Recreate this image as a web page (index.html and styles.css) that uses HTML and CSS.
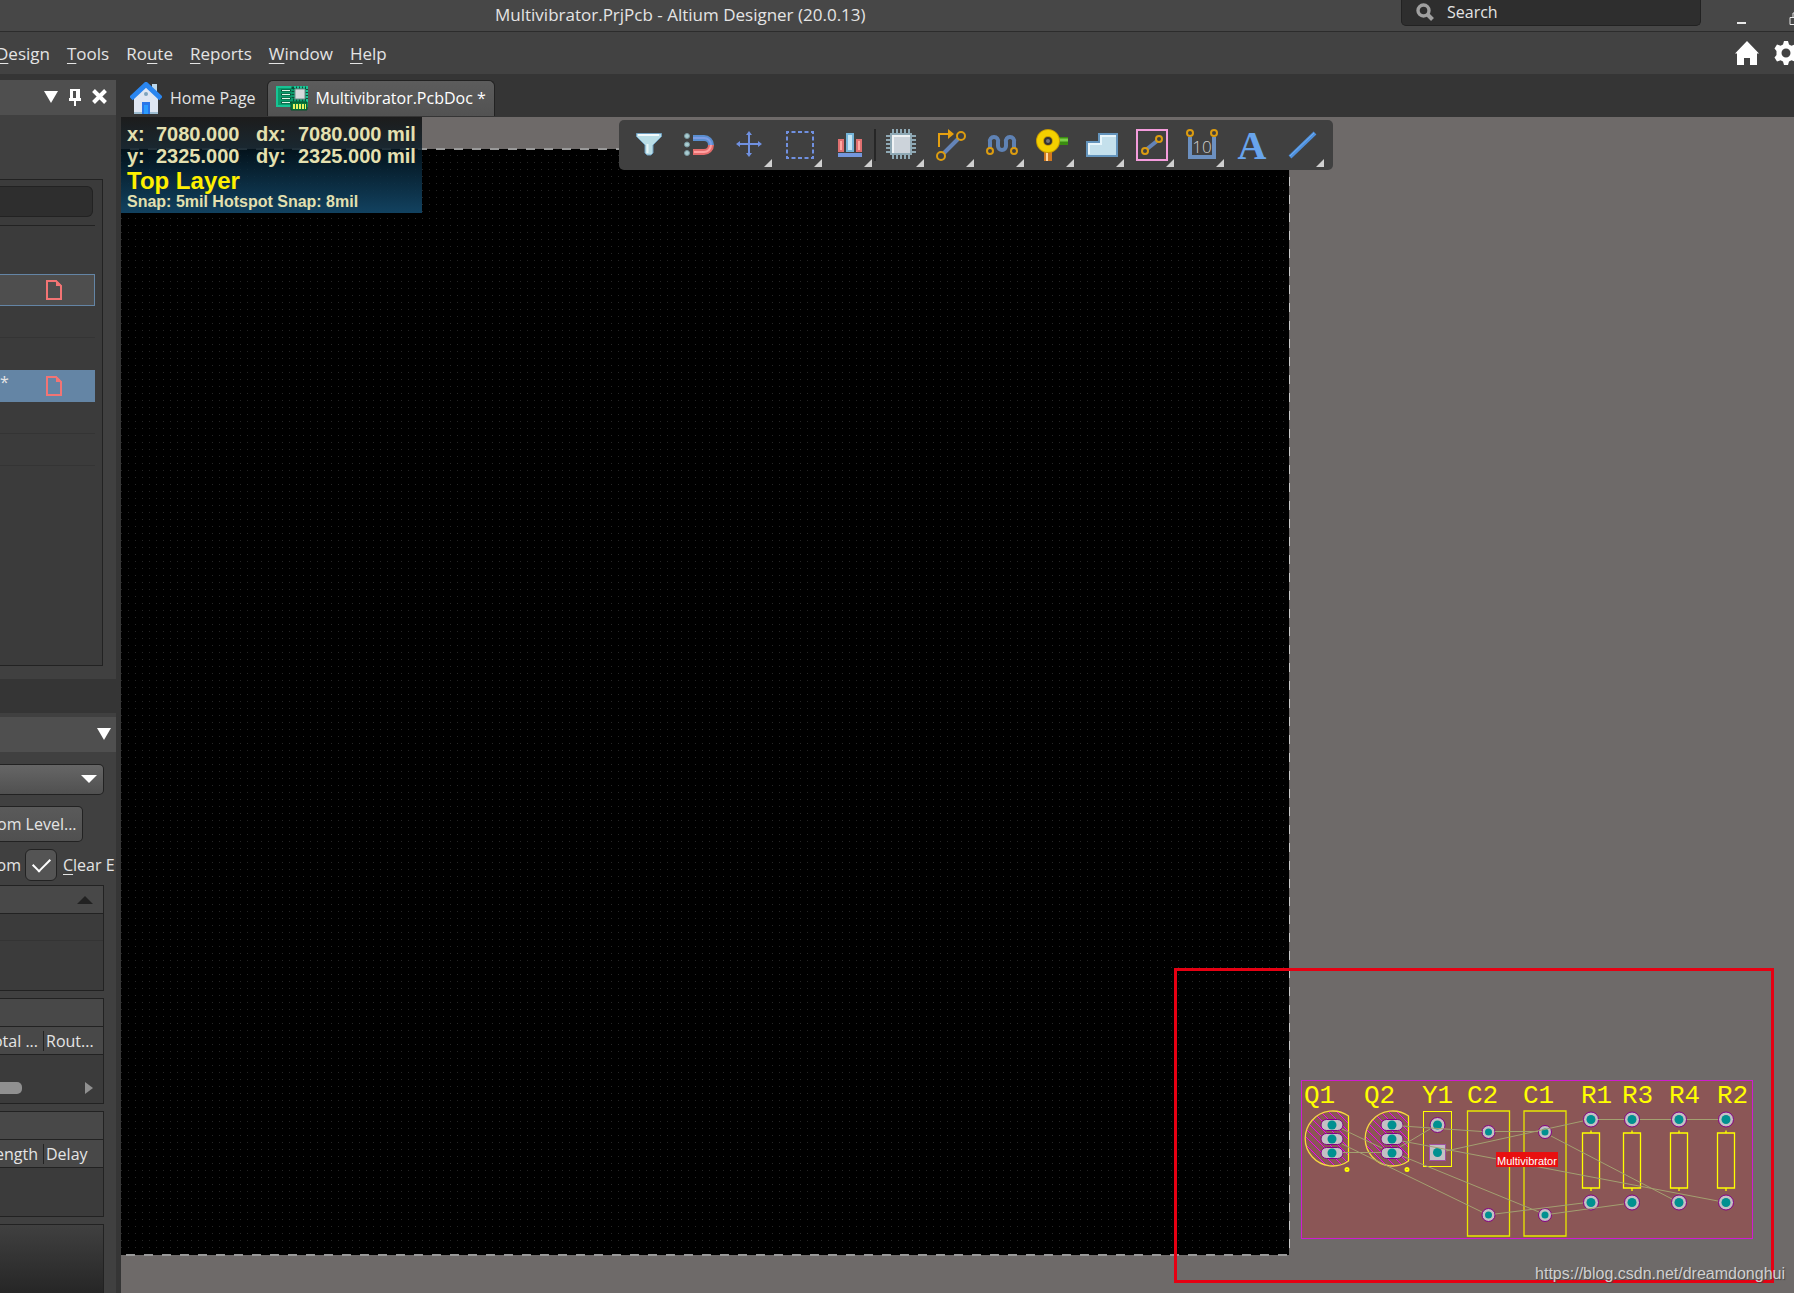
FILE: index.html
```html
<!DOCTYPE html>
<html lang="en">
  <head>
    <meta charset="UTF-8" />
    <meta name="viewport" content="width=device-width, initial-scale=1.0" />
    <title>Multivibrator.PrjPcb - Altium Designer (20.0.13)</title>
    <link rel="stylesheet" href="styles.css" />
  </head>
  <body>
    <header class="titlebar">
      <h1 class="title">Multivibrator.PrjPcb - Altium Designer (20.0.13)</h1>
      <label class="search">
        <svg width="18" height="18" viewBox="0 0 18 18">
          <circle cx="7.5" cy="7.5" r="5.5" fill="none" stroke="#a0a0a0" stroke-width="3.4" />
          <path d="M11.5 11.5l5 5" stroke="#a0a0a0" stroke-width="4" />
        </svg>
        <input type="text" placeholder="Search" aria-label="Search" />
      </label>
      <div class="window-buttons">
        <button aria-label="Minimize">
          <svg width="14" height="20"><path d="M2 15h9" stroke="#e8e8e8" stroke-width="2" /></svg>
        </button>
        <button aria-label="Restore">
          <svg width="14" height="20"><path d="M1 9.500h9v7h-9zM4 9V5h9v7h-3" fill="none" stroke="#e8e8e8" /></svg>
        </button>
      </div>
    </header>

    <nav class="menubar">
      <div class="menu">
        <button><u>D</u>esign</button>
        <button><u>T</u>ools</button>
        <button>Ro<u>u</u>te</button>
        <button><u>R</u>eports</button>
        <button><u>W</u>indow</button>
        <button><u>H</u>elp</button>
      </div>
      <div class="menu-icons">
        <button aria-label="Home">
          <svg width="24" height="24"><path d="M12 0l12 12.500h-2V24h-7v-7H9v7H2V12.500H0z" fill="#fff" /></svg>
        </button>
        <button aria-label="Settings">
          <svg width="24" height="24">
            <path d="M10 0h4l1 3.500 2.500 1.200L21 3.500l2.500 4-2 2.500v4l2 2.500-2.500 4-3.500-1.200L15 20.500 14 24h-4l-1-3.500-2.500-1.200L3 20.500l-2.500-4L2.500 14v-4l-2-2.500 2.500-4 3.500 1.200L9 3.500zM12 7.500a4.500 4.500 0 1 0 0 9 4.500 4.500 0 0 0 0-9z" fill="#fff" />
          </svg>
        </button>
      </div>
    </nav>

    <div class="content">
      <aside class="sidebar">
        <section class="panel projects">
          <div class="panel-header">
            <button aria-label="Panel menu"><svg width="14" height="12"><path d="M0 0h14l-7 12z" fill="#fff" /></svg></button>
            <button aria-label="Pin">
              <svg width="12" height="18"><path d="M1 1h10v9h1v3H7v5H5v-5H0v-3h1zM4 3v7h3V3z" fill="#fff" fill-rule="evenodd" /></svg>
            </button>
            <button aria-label="Close"><svg width="15" height="15"><path d="M1.500 1.500l12 12M13.500 1.500l-12 12" stroke="#fff" stroke-width="4" /></svg></button>
          </div>
          <div class="tree">
            <input class="tree-search" type="text" aria-label="Search projects" />
            <ul class="tree-rows">
              <li></li>
              <li class="outlined">
                <svg width="16" height="20"><path d="M1 1h9l5 5v13H1z" fill="none" stroke="#f27474" stroke-width="2" /><path d="M10 0v6h6z" fill="#f27474" /></svg>
              </li>
              <li></li>
              <li></li>
              <li class="selected">
                <span>*</span>
                <svg width="16" height="20"><path d="M1 1h9l5 5v13H1z" fill="none" stroke="#f27474" stroke-width="2" /><path d="M10 0v6h6z" fill="#f27474" /></svg>
              </li>
              <li></li>
              <li></li>
            </ul>
          </div>
        </section>

        <section class="panel pcb">
          <div class="panel-header">
            <button aria-label="Panel menu"><svg width="14" height="12"><path d="M0 0h14l-7 12z" fill="#fff" /></svg></button>
          </div>
          <div class="pcb-body">
            <div class="select-box">
              <select aria-label="Panel mode"><option></option></select>
              <svg width="16" height="8"><path d="M0 0h16l-8 8z" fill="#fff" /></svg>
            </div>
            <button class="level">om Level...</button>
            <div class="checks">
              <span class="cut">om</span>
              <input type="checkbox" id="clear" checked />
              <label for="clear"><u>C</u>lear E</label>
            </div>
            <div class="list">
              <div class="list-head"><svg width="16" height="8"><path d="M0 8h16L8 0z" fill="#222" /></svg></div>
              <div class="list-row"></div>
            </div>
            <div class="list">
              <div class="list-head"></div>
              <div class="list-cols"><span class="col-first">otal ...</span><span class="col-last">Rout...</span></div>
              <div class="scroll">
                <div class="thumb"></div>
                <svg width="8" height="12"><path d="M0 0l8 6-8 6z" fill="#909090" /></svg>
              </div>
            </div>
            <div class="list">
              <div class="list-head"></div>
              <div class="list-cols"><span class="col-first">ength</span><span class="col-last">Delay</span></div>
            </div>
            <div class="preview"></div>
          </div>
        </section>
      </aside>

      <main class="editor">
        <div class="tabs">
          <button class="tab">
            <svg width="32" height="32">
              <path d="M22 2h5v12h-5z" fill="#bcd7ea" />
              <path d="M4 15L16 4l12 11v17H4z" fill="#dfe6f2" />
              <path d="M4 30h24v2H4z" fill="#9dbcd0" />
              <path d="M1 16.500L16 2.500l15 14" fill="none" stroke="#2a86f0" stroke-width="5" />
              <circle cx="16" cy="12" r="2" fill="#7fa3bd" />
              <path d="M12 20h8v12h-8z" fill="#2a76e8" />
              <path d="M14 23h4v9h-4z" fill="#2a9cff" />
            </svg>
            Home Page
          </button>
          <button class="tab active">
            <svg width="32" height="26">
              <path d="M1 2h30v19H1z" fill="#0a9c6c" stroke="#17c495" stroke-width="2" />
              <path d="M5 5.500h10M5 9.500h10M5 13.500h10M5 17.500h10" stroke="#0a4a38" stroke-width="2" />
              <path d="M6 5.500h8M6 9.500h8M6 13.500h8M6 17.500h8" stroke="#e0f5e8" stroke-width="1" />
              <path d="M17 3h14v12H17z" fill="none" stroke="#0a5038" stroke-width="3" stroke-dasharray="1 2" />
              <path d="M19 4h10v10H19z" fill="#d6dadc" stroke="#6f8c8a" />
              <path d="M15 17h16v8H15z" fill="#067a3c" stroke="#04502a" />
              <path d="M17 21.500h13" stroke="#e8f060" stroke-width="5" stroke-dasharray="2 1" />
            </svg>
            Multivibrator.PcbDoc *
          </button>
        </div>

        <div class="workspace">
          <!-- Board and components, drawn in window coordinates -->
          <svg class="canvas" width="100%" height="100%">
            <defs>
              <pattern id="dots" width="7" height="7" patternUnits="userSpaceOnUse">
                <rect x="2" y="1" width="1" height="1" fill="#262626" />
              </pattern>
              <pattern id="hatch" width="8" height="8" patternUnits="userSpaceOnUse">
                <path d="M-1 -1l10 10M-1 7l2 2M7 -1l2 2" stroke="#f000f0" />
              </pattern>
              <g id="slot">
                <rect x="-11" y="-5.500" width="22" height="11" rx="5.500" fill="#c4c0c4" stroke="#850085" />
                <circle r="4.500" fill="#009090" />
              </g>
              <g id="transistor">
                <path d="M16.500 -23a27.500 27.500 0 1 0 0 45z" fill="url(#hatch)" stroke="#f5d840" stroke-width="1.300" />
                <path d="M16.500 -23v45" stroke="#ff0" />
                <circle cx="15" cy="30.500" r="1.500" fill="none" stroke="#ff0" stroke-width="2" />
                <use href="#slot" y="-14" />
                <use href="#slot" />
                <use href="#slot" y="14" />
              </g>
              <g id="pad">
                <circle r="7.500" fill="#c4c0c4" stroke="#850085" />
                <circle r="4.500" fill="#009090" />
              </g>
              <g id="small-pad">
                <circle r="6.500" fill="#c4c0c4" stroke="#850085" />
                <circle r="3.500" fill="#009090" />
              </g>
              <g id="capacitor">
                <path d="M-21 -21h42v125h-42z" fill="none" stroke="#e8e800" stroke-width="1.300" />
                <use href="#small-pad" />
                <use href="#small-pad" y="83" />
              </g>
              <g id="resistor">
                <path d="M-8.500 13.500h17v55h-17zM0 11v2.500M0 68.500v3" fill="none" stroke="#ff0" stroke-width="1.300" />
                <use href="#pad" />
                <use href="#pad" y="83" />
              </g>
            </defs>
            <g transform="translate(-121 -117)">
              <rect x="121" y="149" width="1168" height="1106" fill="#000" />
              <rect x="121" y="149" width="1168" height="1105" fill="url(#dots)" />
              <path d="M112 149H1289" stroke="#999" stroke-width="2" stroke-dasharray="9 9" />
              <path d="M1289.500 148V1255" stroke="#c8c8c8" stroke-dasharray="9 9" stroke-dashoffset="7" />
              <path d="M121 1255H1289" stroke="#999" stroke-width="2" stroke-dasharray="9 9" stroke-dashoffset="13" />

              <rect x="1301.500" y="1080.500" width="451" height="158" fill="#8b5656" stroke="#d01cd0" />
              <use href="#transistor" x="1332" y="1139" />
              <use href="#transistor" x="1392" y="1139" />
              <rect x="1423.500" y="1111.500" width="28" height="55" fill="none" stroke="#ff0" />
              <use href="#pad" x="1437.500" y="1125" />
              <rect x="1429.500" y="1144.500" width="16" height="16" fill="#c4c0c4" stroke="#a050a0" />
              <circle cx="1437.500" cy="1152.500" r="4.500" fill="#009090" />
              <use href="#capacitor" x="1488.500" y="1132" />
              <use href="#capacitor" x="1545" y="1132" />
              <use href="#resistor" x="1591" y="1119.500" />
              <use href="#resistor" x="1632" y="1119.500" />
              <use href="#resistor" x="1679" y="1119.500" />
              <use href="#resistor" x="1726" y="1119.500" />

              <!-- Ratsnest -->
              <g stroke="#a3a070">
                <path d="M1342 1129L1382 1148M1342 1144L1482 1212M1343 1152.500H1381" />
                <path d="M1402 1126L1482 1131.500M1402 1141L1718 1201M1402 1156L1539 1212M1400 1147L1430 1129" />
                <path d="M1446 1151L1583 1121M1495 1131.500H1538M1551 1136L1672 1199" />
                <path d="M1495 1214L1583 1203M1551 1214L1624 1204" />
                <path d="M1598 1119.500H1624M1640 1119.500H1671M1687 1119.500H1718" />
              </g>

              <g class="designators">
                <text x="1304" y="1103">Q1</text>
                <text x="1364" y="1103">Q2</text>
                <text x="1422" y="1103">Y1</text>
                <text x="1467" y="1103">C2</text>
                <text x="1523" y="1103">C1</text>
                <text x="1581" y="1103">R1</text>
                <text x="1622" y="1103">R3</text>
                <text x="1669" y="1103">R4</text>
                <text x="1717" y="1103">R2</text>
              </g>
              <rect x="1496" y="1152" width="62" height="15" fill="#e81010" />
              <text class="room-name" x="1497" y="1165">Multivibrator</text>
              <rect x="1175.500" y="969.500" width="597" height="312" fill="none" stroke="#e60012" stroke-width="3" />
            </g>
          </svg>

          <div class="hud">
            <div class="coords"><span>x:</span><span>7080.000</span><span>dx:</span><span>7080.000 mil</span></div>
            <div class="coords"><span>y:</span><span>2325.000</span><span>dy:</span><span>2325.000 mil</span></div>
            <div class="layer">Top Layer</div>
            <div class="snap">Snap: 5mil Hotspot Snap: 8mil</div>
          </div>

          <div class="toolbar">
            <button aria-label="Filter">
              <svg width="50" height="50"><path d="M12.500 13.500h25v3l-8.500 8.500v8l-2 2h-4l-2-2v-8l-8.500-8.500z" fill="#b9dde6" stroke="#6f9fc0" /><path d="M14 15h21" stroke="#f2fafc" stroke-width="2" /><path d="M23.500 24v9" stroke="#e6f5f8" stroke-width="2" /></svg>
            </button>
            <button aria-label="Snapping">
              <svg width="50" height="50">
                <g fill="#a9ccd0" stroke="#7898a0"><circle cx="13" cy="16" r="2.500" /><circle cx="13" cy="24.500" r="2.500" /><circle cx="13" cy="33" r="2.500" /></g>
                <path d="M19 18h11a7 7 0 0 1 7 7" fill="none" stroke="#5a8ed0" stroke-width="6" />
                <path d="M19 32h11a7 7 0 0 0 7-7" fill="none" stroke="#e46c6c" stroke-width="6" />
                <path d="M19 18h11a7 7 0 0 1 7 7" fill="none" stroke="#7c9ce4" stroke-width="2" />
                <path d="M20 32h10a7 7 0 0 0 7-7" fill="none" stroke="#ffa0a0" stroke-width="2" />
              </svg>
            </button>
            <button aria-label="Move">
              <svg width="50" height="50"><path d="M14 24h22M25 13v22" stroke="#7090e0" stroke-width="2" /><path d="M12 24l4-3v6zM38 24l-4-3v6zM25 11l-3 4h6zM25 37l-3-4h6z" fill="#7090e0" /><path class="more" d="M48 39v8h-8z" /></svg>
            </button>
            <button aria-label="Select">
              <svg width="50" height="50"><rect x="13" y="12" width="26" height="26" fill="none" stroke="#7090e0" stroke-width="2" stroke-dasharray="4 2.500" stroke-dashoffset="2" /><path class="more" d="M48 39v8h-8z" /></svg>
            </button>
            <button aria-label="Align">
              <svg width="50" height="50"><path d="M15 20h4v11h-4zM33 20h4v11h-4z" fill="#ffa8a0" stroke="#e07070" stroke-width="2" /><path d="M23 14h6v17h-6z" fill="#c5e6f4" stroke="#74b4d8" stroke-width="2" /><path d="M14 35h24" stroke="#7496dc" stroke-width="4" /><path class="more" d="M48 39v8h-8z" /></svg>
            </button>
            <i class="divider"></i>
            <button aria-label="Place component">
              <svg width="50" height="50"><path d="M17 9v30M21 9v30M25 9v30M29 9v30M33 9v30M10 16h30M10 20h30M10 24h30M10 28h30M10 32h30" stroke="#8fa9b5" stroke-width="2" /><rect x="15" y="14" width="20" height="20" fill="#ccd3da" stroke="#8fa9b5" stroke-width="2" /><path d="M17 33V16h17" fill="none" stroke="#f0f3f5" stroke-width="2" /><path class="more" d="M48 39v8h-8z" /></svg>
            </button>
            <button aria-label="Route">
              <svg width="50" height="50"><path d="M13 27V14h10" fill="none" stroke="#e6a010" stroke-width="2" /><path d="M22 9l6 5-6 5z" fill="#e6a010" /><path d="M18 33l14-14" stroke="#6484b8" stroke-width="4" /><g fill="#404040" stroke="#dc9c10" stroke-width="2"><circle cx="35" cy="16" r="4" /><circle cx="15" cy="36" r="4" /></g><path class="more" d="M48 39v8h-8z" /></svg>
            </button>
            <button aria-label="Tune length">
              <svg width="50" height="50"><path d="M14 28v-6a4 4 0 0 1 4-5 4 4 0 0 1 4 5v4a4 4 0 0 0 8 0v-4a4 4 0 0 1 4-5 4 4 0 0 1 4 5v6" fill="none" stroke="#5f82b4" stroke-width="4" /><g fill="#404040" stroke="#dc9c10" stroke-width="2"><circle cx="14" cy="31" r="3" /><circle cx="38" cy="31" r="3" /></g><path class="more" d="M48 39v8h-8z" /></svg>
            </button>
            <button aria-label="Place via">
              <svg width="50" height="50"><path d="M30 21h12" stroke="#3a8c10" stroke-width="8" /><path d="M33 20h9" stroke="#7cd048" stroke-width="3" /><path d="M22 30v11" stroke="#d07820" stroke-width="8" /><path d="M21 32v9" stroke="#ffd8a0" stroke-width="2" /><circle cx="22" cy="21" r="8" fill="#333" stroke="#c89c00" stroke-width="8" /><circle cx="22" cy="21" r="8" fill="none" stroke="#f4d000" stroke-width="6" /><circle cx="22" cy="21" r="2" fill="#777" /><path class="more" d="M48 39v8h-8z" /></svg>
            </button>
            <button aria-label="Place polygon">
              <svg width="50" height="50"><path d="M11 22h12v-8h18v22H11z" fill="#c4e0ec" stroke="#6494bc" stroke-width="2" /><path d="M13 34V24h12v-8h15" fill="none" stroke="#e8f6fc" stroke-width="2" /><path class="more" d="M48 39v8h-8z" /></svg>
            </button>
            <button aria-label="Place line object">
              <svg width="50" height="50"><rect x="11" y="10" width="30" height="30" fill="none" stroke="#f49cdc" stroke-width="2" /><path d="M21 29l10-8" stroke="#6484b8" stroke-width="4" /><g fill="#404040" stroke="#dc9c10" stroke-width="2"><circle cx="33" cy="19" r="3" /><circle cx="19" cy="31" r="3" /></g><path class="more" d="M48 39v8h-8z" /></svg>
            </button>
            <button aria-label="Place dimension">
              <svg width="50" height="50"><path d="M14 17v20h24V17" fill="none" stroke="#6c90c0" stroke-width="4" /><g fill="#404040" stroke="#dc9c10" stroke-width="2"><circle cx="14" cy="13" r="3" /><circle cx="38" cy="13" r="3" /></g><text class="dim-text" x="26" y="33">10</text><path class="more" d="M48 39v8h-8z" /></svg>
            </button>
            <button aria-label="Place string">
              <svg width="50" height="50"><text class="string-text" x="26" y="39">A</text></svg>
            </button>
            <button aria-label="Place line">
              <svg width="50" height="50"><path d="M14 37l25-24" stroke="#5090dc" stroke-width="4" /><path d="M14 36l24-23" stroke="#70b0f4" stroke-width="1" /><path class="more" d="M48 39v8h-8z" /></svg>
            </button>
          </div>
          <a class="source" href="https://blog.csdn.net/dreamdonghui">https://blog.csdn.net/dreamdonghui</a>
        </div>
      </main>
    </div>
  </body>
</html>
```
FILE: styles.css
```css
* {
  box-sizing: border-box;
}
body {
  margin: 0;
  height: 100vh;
  display: flex;
  flex-direction: column;
  overflow: hidden;
  background-color: #353535;
  color: #e4e4e4;
  font-family: "Open Sans", "Noto Sans", sans-serif;
  font-size: 16px;
  line-height: 24px;
}
button {
  padding: 0;
  border: none;
  background: none;
  color: inherit;
  font: inherit;
  flex-shrink: 0;
}
svg {
  display: block;
  flex-shrink: 0;
}
u {
  text-underline-offset: 3px;
}

/* Title bar */
.titlebar {
  height: 32px;
  flex-shrink: 0;
  display: flex;
  background-color: #474747;
  border-bottom: 1px solid #2c2c2c;
}
.title {
  margin: 3px 0 0 495px;
  font-size: 17px;
  font-weight: normal;
}
.search {
  width: 300px;
  height: 26px;
  margin-left: auto;
  padding: 0 14px 2px;
  display: flex;
  align-items: center;
  gap: 13px;
  background-color: #2e2e2e;
  border: 1px solid #222;
  border-top: none;
  border-radius: 0 0 5px 5px;
}
.search input {
  flex: 1;
  padding: 0;
  border: none;
  background: none;
  font: inherit;
}
.search input::placeholder {
  color: #e4e4e4;
}
.window-buttons {
  display: flex;
  gap: 40px;
  margin: 5px -9px 0 34px;
}

/* Menu bar */
.menubar {
  height: 42px;
  flex-shrink: 0;
  display: flex;
  align-items: center;
  justify-content: space-between;
  background-color: #424242;
}
.menu {
  display: flex;
  gap: 17px;
  margin-left: -4px;
  padding-top: 2px;
  font-size: 17px;
}
.menu-icons {
  display: flex;
  gap: 15px;
  margin-right: -4px;
}
.content {
  flex: 1;
  min-height: 0;
  display: flex;
  gap: 5px;
}

/* Left panels */
.sidebar {
  width: 116px;
  flex-shrink: 0;
  padding-top: 6px;
  display: flex;
  flex-direction: column;
  gap: 34px;
  overflow: hidden;
}
.panel {
  background-color: #404040;
}
.projects {
  height: 599px;
  display: flex;
  flex-direction: column;
}
.panel-header {
  height: 35px;
  flex-shrink: 0;
  padding: 0 9px 2px;
  display: flex;
  align-items: center;
  justify-content: flex-end;
  gap: 11px;
  background-color: #4f4f4f;
}
.tree {
  flex: 1;
  margin: 64px 13px 13px 0;
  padding-top: 6px;
  background-color: #3b3b3b;
  border: 1px solid #222;
  border-left: none;
}
.tree-search {
  display: block;
  width: 93px;
  height: 31px;
  background-color: #2e2e2e;
  border: 1px solid #222;
  border-left: none;
  border-radius: 0 6px 6px 0;
}
.tree-rows {
  width: 95px;
  margin: 8px 0 0;
  padding: 0;
  list-style: none;
}
.tree-rows li {
  position: relative;
  height: 32px;
  padding-left: 46px;
  display: flex;
  align-items: center;
  border-bottom: 1px solid #343434;
}
.tree-rows li:first-child {
  height: 49px;
  border-top: 1px solid #222;
  border-bottom: none;
}
.tree-rows .outlined {
  background-color: #4e4e4e;
  border: 1px solid #6485a5;
  border-left: none;
}
.tree-rows li:nth-child(4) {
  border: none;
}
.tree-rows .selected {
  background-color: #6485a5;
  border: none;
}
.tree-rows span {
  position: absolute;
  left: 0;
  top: 0;
}
.pcb {
  flex: 1;
  min-height: 0;
  padding-top: 4px;
  display: flex;
  flex-direction: column;
}
.pcb .panel-header {
  padding: 0 5px 2px;
}
.pcb-body {
  flex: 1;
  min-height: 0;
  padding: 12px 12px 0 0;
  display: flex;
  flex-direction: column;
  align-items: flex-start;
}
.select-box {
  position: relative;
  width: 100%;
}
.select-box svg {
  position: absolute;
  right: 7px;
  top: 11px;
}
.select-box select {
  display: block;
  width: 100%;
  height: 31px;
  appearance: none;
  background: linear-gradient(#666, #505050);
  border: 1px solid #222;
  border-left: none;
  border-radius: 0 5px 5px 0;
}
.level {
  height: 36px;
  margin-top: 11px;
  padding-right: 5px;
  text-indent: -3px;
  background: linear-gradient(#5a5a5a, #505050);
  border: 1px solid #222;
  border-left: none;
  border-radius: 0 5px 5px 0;
}
.checks {
  height: 32px;
  margin: 7px 0 4px;
  display: flex;
  align-items: center;
  white-space: nowrap;
}
.cut {
  width: 25px;
  display: flex;
  justify-content: flex-end;
  padding-right: 4px;
}
.checks input {
  appearance: none;
  width: 32px;
  height: 32px;
  flex-shrink: 0;
  margin: 0 6px 0 0;
  display: grid;
  place-content: center;
  background-color: #545454;
  border: 1px solid #222;
  border-radius: 6px;
}
.checks input:checked::before {
  content: "";
  width: 15px;
  height: 8px;
  margin-bottom: 4px;
  border: solid #fff;
  border-width: 0 0 2px 2px;
  rotate: -45deg;
}
.list {
  width: 100%;
  height: 106px;
  flex-shrink: 0;
  margin-bottom: 7px;
  background-color: #3b3b3b;
  border: 1px solid #222;
  border-left: none;
}
.list-head,
.list-cols {
  height: 28px;
  display: flex;
  align-items: center;
  background-color: #484848;
  border-bottom: 1px solid #222;
}
.list-head {
  justify-content: flex-end;
  padding-right: 10px;
}
.list-row {
  height: 27px;
  border-bottom: 1px solid #343434;
}
.col-first {
  width: 44px;
  height: 20px;
  padding-right: 5px;
  display: flex;
  align-items: center;
  justify-content: flex-end;
  white-space: nowrap;
  border-right: 1px solid #222;
}
.list-cols .col-last {
  padding-left: 2px;
}
.scroll {
  height: 48px;
  padding: 18px 10px 0 0;
  display: flex;
  align-items: center;
  justify-content: space-between;
}
.thumb {
  width: 22px;
  height: 12px;
  background-color: #909090;
  border-radius: 0 5px 5px 0;
}
.preview {
  width: 100%;
  flex: 1;
  background: linear-gradient(#404040, #262626);
  border: 1px solid #222;
  border-width: 1px 1px 0 0;
}

/* Document tabs */
.editor {
  flex: 1;
  min-width: 0;
  display: flex;
  flex-direction: column;
}
.tabs {
  height: 43px;
  flex-shrink: 0;
  padding: 6px 0 1px 9px;
  display: flex;
  gap: 11px;
}
.tab {
  display: flex;
  align-items: center;
  gap: 8px;
}
.tab.active {
  padding: 0 8px 1px;
  color: #fff;
  background: linear-gradient(#5c5c5c, #525252);
  border: 1px solid #222;
  border-bottom: none;
  border-radius: 6px 6px 0 0;
}

/* Workspace */
.workspace {
  position: relative;
  flex: 1;
  min-height: 0;
  background-color: #6e6a69;
  overflow: hidden;
}
.designators {
  fill: #ff0;
  font-family: "Liberation Mono", monospace;
  font-size: 26px;
}
.room-name {
  fill: #fff;
  font-family: "Liberation Sans", sans-serif;
  font-size: 11px;
}
.hud {
  position: absolute;
  left: 0;
  top: 0;
  width: 301px;
  height: 96px;
  padding: 6px 0 0 6px;
  background: linear-gradient(rgba(24, 24, 24, 0.95), rgba(4, 24, 36, 0.8) 35%, #124260);
  color: #e4e0b0;
  font-family: "Liberation Sans", sans-serif;
  font-weight: bold;
}
.coords {
  display: grid;
  grid-template-columns: 29px 100px 42px auto;
  font-size: 20px;
  line-height: 22px;
}
.layer {
  color: #fff000;
  font-size: 24px;
  line-height: 28px;
}
.snap {
  font-size: 16px;
  line-height: 14px;
}
.toolbar {
  position: absolute;
  left: 498px;
  top: 3px;
  height: 50px;
  padding: 0 7px 0 5px;
  display: flex;
  align-items: center;
  background-color: #404040;
  border-radius: 5px;
}
.divider {
  width: 2px;
  height: 32px;
  background-color: #262626;
}
.more {
  fill: #d0d0d0;
}
.dim-text {
  fill: #d0d0d0;
  font-family: "Open Sans", sans-serif;
  font-size: 17px;
  font-weight: 300;
  text-anchor: middle;
}
.string-text {
  fill: #68a4ec;
  font-family: "Liberation Serif", serif;
  font-size: 40px;
  font-weight: bold;
  text-anchor: middle;
}
.source {
  position: absolute;
  right: 9px;
  bottom: 7px;
  color: #d0d0d0;
  font-family: "Liberation Sans", sans-serif;
  text-decoration: none;
  text-shadow: 1px 1px 1px #444;
}
```
